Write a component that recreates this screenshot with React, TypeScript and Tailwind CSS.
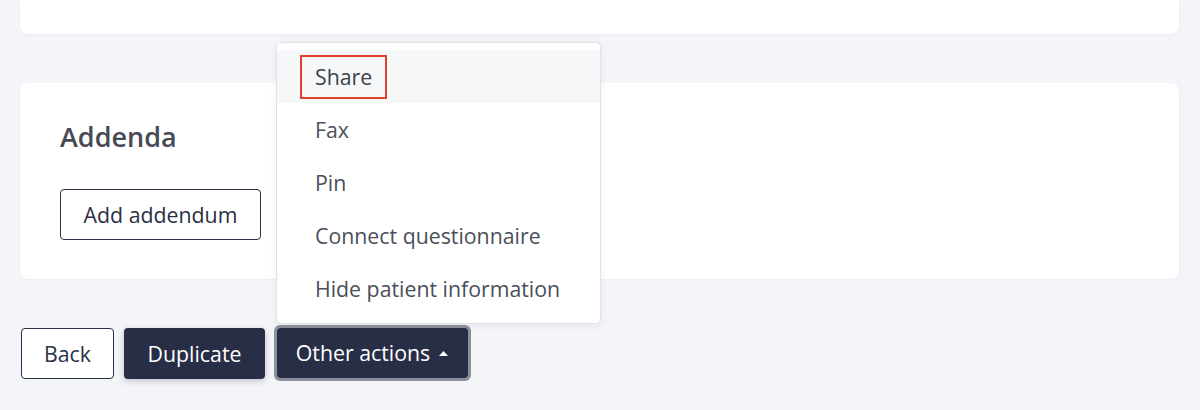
import React from "react";

const menuItems = ["Share", "Fax", "Pin", "Connect questionnaire", "Hide patient information"];

export default function App() {
  return (
    <div className="h-[410px] w-full overflow-hidden bg-[#f4f5f9] px-[20px] font-['Open_Sans',sans-serif]">
      {/* top card, cut off by viewport */}
      <div className="h-[34px] w-[1159px] rounded-b-lg bg-white shadow-[0_1px_3px_rgba(30,40,70,0.05)]" />

      <div className="mt-[49px] flex h-[196px] w-[1159px] flex-col items-start rounded-lg bg-white px-[40px] pt-[38px] shadow-[0_1px_3px_rgba(30,40,70,0.05)]">
        <h2 className="text-[27px] font-semibold leading-[32px] text-[#454a55]">Addenda</h2>
        <button className="mt-[36px] h-[51px] w-[201px] rounded-[4px] border-[1.5px] border-[#2a3045] bg-white text-[21.3px] text-[#2a3045]">
          Add addendum
        </button>
      </div>

      <div className="mt-[49px] flex items-start">
        <button className="ml-px h-[51px] w-[93px] rounded-[4px] border-[1.5px] border-[#2a3045] bg-white text-[21.3px] text-[#2a3045]">
          Back
        </button>
        <button className="ml-[10px] h-[51px] w-[141px] rounded-[4px] bg-[#272e45] text-[21.3px] text-white shadow-[0_2px_6px_rgba(30,40,70,0.25)]">
          Duplicate
        </button>
        <div className="relative ml-[9px] -mt-[3px]">
          <div className="absolute bottom-[57px] left-[2px] w-[325px] rounded-[5px] border border-[#dfe2e8] bg-white pb-[8px] pt-[7px] shadow-[0_2px_8px_rgba(30,40,70,0.06)]">
            {menuItems.map((item, i) => (
              <div
                key={item}
                className={
                  i === 0
                    ? "flex h-[53px] items-center bg-[#f6f7f9] pl-[23px] text-[21.3px] text-[#3a3f4a]"
                    : "flex h-[53px] items-center pl-[38px] text-[21.3px] text-[#4a4f59]"
                }
              >
                {i === 0 ? (
                  <span className="flex h-[44px] items-center border-2 border-[#e0402e] px-[13px]">{item}</span>
                ) : (
                  item
                )}
              </div>
            ))}
          </div>
          <div className="rounded-[6px] bg-[#8c909b] p-[3px]">
            <button className="flex h-[50px] w-[191px] items-center justify-center gap-[8px] rounded-[4px] bg-[#272e45] text-[21.3px] text-white">
              Other actions
              <svg width="11" height="7" viewBox="0 0 11 7">
                <path d="M5.5 1 L10 6 L1 6 Z" fill="white" />
              </svg>
            </button>
          </div>
        </div>
      </div>
    </div>
  );
}
